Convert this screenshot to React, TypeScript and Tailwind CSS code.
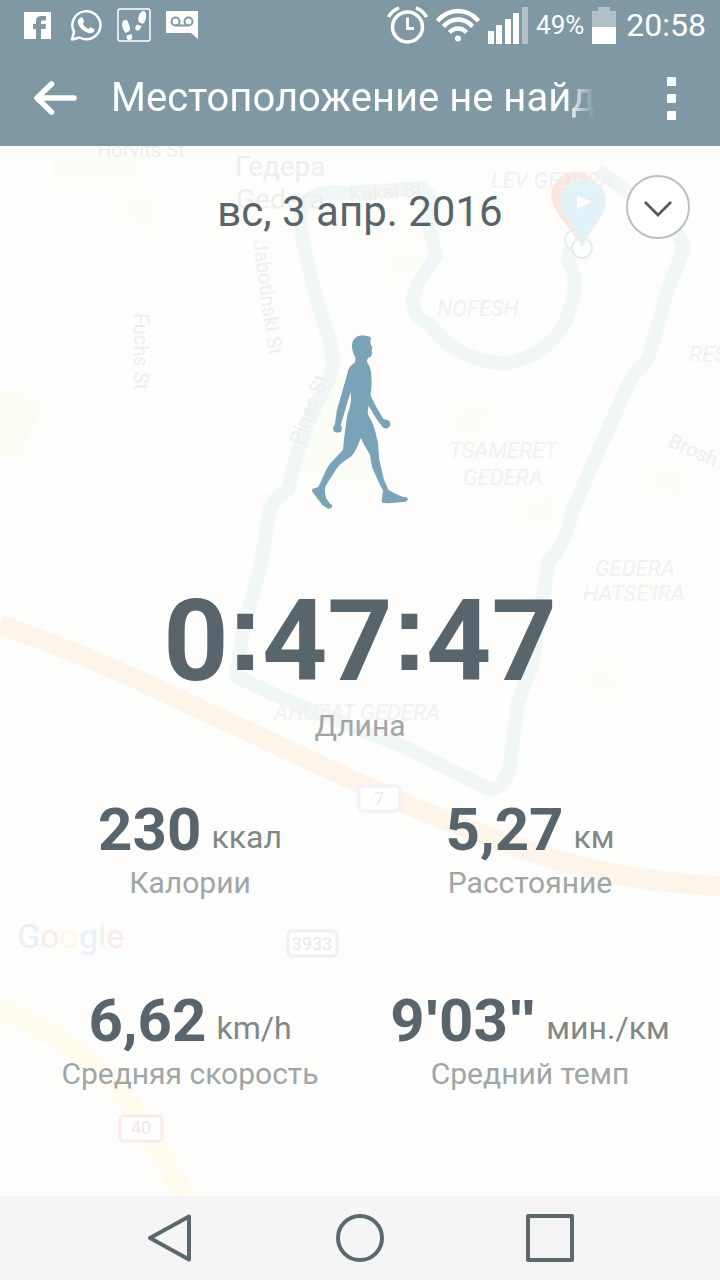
import React from 'react';

function FacebookIcon() {
  return (
    <svg viewBox="0 0 27 27" className="h-[27px] w-[27px]" aria-hidden="true">
      <rect width="27" height="27" fill="#fff" />
      <path d="M12 27V17h-3v-5h3V9.500C12 5.500 14 4 17.500 4H22v4.500h-3c-1.500 0-2 .5-2 2V12h5l-.6 5H17v10z" fill="#7f98a3" />
    </svg>
  );
}

function WhatsAppIcon() {
  return (
    <svg viewBox="0 0 32 33" className="h-[33px] w-8" fill="none" aria-hidden="true">
      <path d="M2 30.500l2-7.800A14 14 0 1 1 9.700 28.500z" stroke="#fff" strokeWidth="2.500" strokeLinejoin="round" />
      <path d="M10.500 8.500c.8-.5 1.800-.4 2.200.4l1.500 3.300c.2.600-.9 1.900-1.400 2.500 1.300 2.500 3.200 4.200 5.800 5.300.7-.8 1.400-2 2-1.800l3.400 1.700c.9.500.3 2.400-.5 3.200-1.600 1.500-4 1.400-6.600.3-4-1.600-7-4.500-8.700-8.200-1.100-2.600-.2-5.400 2.300-6.700z" fill="#fff" />
    </svg>
  );
}

function StepsIcon() {
  return (
    <svg viewBox="0 0 34 34" className="h-[34px] w-[34px]" aria-hidden="true">
      <rect x="1" y="1" width="32" height="32" rx="2" fill="none" stroke="#fff" strokeWidth="1.500" />
      <path d="M21.500 9c1-4 3.500-6.500 5.500-6 3 1 2.500 7 .8 10.500-.7 1.600-1.800 2.500-3.300 2l-2-1c-1.500-1-1.500-3-1-5.500z" fill="#fff" />
      <path d="M20 16.500l4.500 1.500c-.5 2.500-2.500 5-4.700 4.500-2.300-.7-2-3.500.2-6z" fill="#fff" />
      <path d="M5.500 14c1.500-3.500 5-2.500 6 1l1.500 5c.3 1.400-.3 2.800-1 3.300l-3 1.700C7 24 4 17.500 5.500 14z" fill="#fff" />
      <path d="M9.500 27.500l5-1.500c1.500 3 .5 5.700-1.800 6.300-2.500 0-3.200-1.800-3.200-4.800z" fill="#fff" />
    </svg>
  );
}

function VoicemailIcon() {
  return (
    <svg viewBox="0 0 32 28" className="h-7 w-8" aria-hidden="true">
      <path d="M0 0h32v28l-7-6H0z" fill="#fff" />
      <g fill="none" stroke="#7f98a3" strokeWidth="2">
        <circle cx="9.500" cy="10.500" r="4" />
        <circle cx="22.500" cy="10.500" r="4" />
        <path d="M9.500 14.500h13" />
      </g>
    </svg>
  );
}

function AlarmIcon() {
  return (
    <svg viewBox="0 0 41 38" className="h-[38px] w-[41px]" fill="none" stroke="#fff" aria-hidden="true">
      <circle cx="20.500" cy="21" r="15" strokeWidth="3.500" />
      <path d="M20.500 11.500V22.500H27" strokeWidth="2.800" />
      <path d="M1.500 11Q5 4.500 12 1.800M39.500 11Q36 4.500 29 1.800" strokeWidth="3.500" />
    </svg>
  );
}

function WifiIcon() {
  return (
    <svg viewBox="0 0 44 34" className="h-[34px] w-11" fill="none" stroke="#fff" strokeWidth="4.500" aria-hidden="true">
      <path d="M1.500 13Q10 3 22 3t20.500 10" />
      <path d="M7.500 18.500Q13.500 11.500 22 11.500t14.500 7" />
      <path d="M13.500 24.500Q17 20.500 22 20.500t8.500 4" />
      <circle cx="22" cy="30.500" r="3" fill="#fff" stroke="none" />
    </svg>
  );
}

function SignalIcon() {
  return (
    <svg viewBox="0 0 40 37" className="h-[37px] w-10" fill="#fff" aria-hidden="true">
      <rect x="0" y="24" width="6" height="13" />
      <rect x="8" y="18" width="6" height="19" />
      <rect x="17" y="12" width="6" height="25" />
      <rect x="25" y="6" width="6" height="31" />
      <rect x="34" y="0" width="6" height="37" opacity=".4" />
    </svg>
  );
}

function BatteryIcon() {
  return (
    <svg viewBox="0 0 24 37" className="h-[37px] w-6" fill="#fff" aria-hidden="true">
      <path d="M0 20V4h6V0h12v4h6v16z" opacity=".4" />
      <rect y="20" width="24" height="17" />
    </svg>
  );
}

function StatusBar() {
  return (
    <div className="flex h-[50px] items-center justify-between pl-6 pr-3.5 text-white">
      <div className="flex items-center gap-[15px]">
        <span className="pr-1"><FacebookIcon /></span>
        <WhatsAppIcon />
        <StepsIcon />
        <VoicemailIcon />
      </div>
      <div className="flex items-center gap-2">
        <AlarmIcon />
        <WifiIcon />
        <SignalIcon />
        <span className="text-[26px] leading-8">49%</span>
        <BatteryIcon />
        <span className="pl-0.5 text-[32px] leading-8">20:58</span>
      </div>
    </div>
  );
}

function TitleBar() {
  return (
    <div className="flex h-24 items-center text-white">
      <button type="button" aria-label="Назад" className="ml-[34px] shrink-0">
        <svg viewBox="0 0 43 34" className="h-[34px] w-[43px]" fill="none" stroke="#fff" strokeWidth="5.500" strokeLinecap="round" strokeLinejoin="round">
          <path d="M17.500 3L3 17l14.500 14M4 17h36" />
        </svg>
      </button>
      <h1 className="ml-8 overflow-hidden whitespace-nowrap pl-0.5 text-[40px] font-normal leading-[48px] [mask-image:linear-gradient(to_right,#000_94%,transparent)]">
        Местоположение не найд
      </h1>
      <button type="button" aria-label="Меню" className="ml-auto mr-10 flex shrink-0 flex-col gap-2 px-1">
        <span className="h-[9px] w-[9px] rounded-[1px] bg-white" />
        <span className="h-[9px] w-[9px] rounded-[1px] bg-white" />
        <span className="h-[9px] w-[9px] rounded-[1px] bg-white" />
      </button>
    </div>
  );
}

function MapBackdrop() {
  return (
    <svg viewBox="0 146 720 1050" preserveAspectRatio="xMidYMin slice" className="absolute inset-0 h-full w-full" aria-hidden="true">
      <rect y="146" width="720" height="1050" fill="#fdfdfb" />
      <g fill="#fbfdf7">
        <path d="M50 160l90-5-5 28-80-2zM125 200l35-8-10 40-28-15zM388 250l35 5-2 25-33-5zM456 410l34-5-6 30-30-3zM520 505l32-10 6 22-32 8zM650 470l38-4-6 30-32-3zM335 365l-40 110 90 10-20-100zM585 670l40-5-5 25-32 2z" />
        <path d="M0 390l44 14-25 52-19-2z" fill="#f9fdf4" />
      </g>
      <g fill="none" stroke="#fff" opacity=".65">
        <path d="M0 375Q60 388 120 420Q200 465 290 492Q380 515 540 552L720 580" strokeWidth="12" />
        <path d="M0 294H115M145 266H230M10 150V375M48 150V290M108 290V385M145 260V420M215 170V400M170 170L155 240M145 380L280 375M178 470Q175 560 205 580L240 585M220 485L222 575M430 440L470 350M670 250L600 400M610 150L700 240M540 530L720 540M540 665Q640 650 650 730M560 740L670 750M600 760V810M640 760V810M570 690V760" strokeWidth="6" />
        <path d="M0 880Q130 880 230 920L360 955M360 960L650 1050L720 1060M475 880L450 980" strokeWidth="10" />
      </g>
      <path d="M0 625Q80 652 170 695L350 779Q450 826 560 861Q640 883 720 886" fill="none" stroke="#fef5ea" strokeWidth="20" />
      <path d="M0 1009Q60 1032 120 1088Q145 1125 185 1196" fill="none" stroke="#fffced" strokeWidth="21" />
      <g fill="none" stroke="#f1f6f7" strokeWidth="14" strokeLinejoin="round">
        <path d="M428 188L345 193Q298 188 300 225Q310 280 326 330Q340 362 325 387Q300 435 288 490Q270 500 269 515Q262 570 245 620L236 676L290 702L400 745L491 790Q507 785 510 765L518 702L532 665L549 560Q566 545 572 512L590 470L632 376L648 359L668 290L684 248Q676 225 652 210L598 170" />
        <path d="M428 188L430 230L436 256L420 280Q402 312 430 325Q455 360 505 364Q550 355 566 320Q582 280 568 262L572 246" />
      </g>
      <circle cx="575" cy="240" r="10" fill="#fff" stroke="#e9efef" strokeWidth="2" />
      <path d="M551 195a24 24 0 1 1 49 3c-3 19-19 29-22 47-4-18-25-28-27-50z" fill="#fde5de" />
      <circle cx="582" cy="248" r="10" fill="#fff" stroke="#e2eded" strokeWidth="2" />
      <path d="M560 201a23 23 0 1 1 46 0c0 16-16 26-22 45h-3c-5-19-21-30-21-45z" fill="#e1f1f7" />
      <path d="M577 195v14l14-7z" fill="#fff" />
      <g fill="#eeefed" fontFamily="Roboto, sans-serif" fontSize="20">
        <text x="97" y="157">Horvits St</text>
        <text x="235" y="176" fontSize="28">Гедера</text>
        <text x="236" y="209" fontSize="28">Gedera</text>
        <text x="350" y="202" transform="rotate(-5 350 202)">Kakal St</text>
        <text x="253" y="241" transform="rotate(82 253 241)">Jabotinski St</text>
        <text x="134" y="313" transform="rotate(90 134 313)">Fuchs St</text>
        <text x="302" y="446" transform="rotate(-69 302 446)">Pines St</text>
        <text x="667" y="446" transform="rotate(24 667 446)">Brosh</text>
      </g>
      <g fill="#f1f2ef" fontFamily="Roboto, sans-serif" fontSize="22" fontStyle="italic">
        <text x="491" y="188">LEV GEDERA</text>
        <text x="437" y="316">NOFESH</text>
        <text x="689" y="362">RES</text>
        <text x="449" y="458">TSAMERET</text>
        <text x="463" y="485">GEDERA</text>
        <text x="595" y="576">GEDERA</text>
        <text x="583" y="601">HATSE&apos;IRA</text>
        <text x="274" y="720">AHUZAT GEDERA</text>
      </g>
      <g fontFamily="Roboto, sans-serif" fontSize="18" textAnchor="middle" strokeWidth="3">
        <rect x="359" y="786" width="41" height="25" rx="4" fill="#fefefd" stroke="#f2f2f8" />
        <text x="379" y="805" fill="#ebebeb">7</text>
        <rect x="288" y="931" width="49" height="25" rx="4" fill="#fefefd" stroke="#f0f0ef" />
        <text x="312" y="950" fill="#e9e9e8">3933</text>
        <rect x="120" y="1116" width="42" height="25" rx="4" fill="#fefefd" stroke="#faeceb" />
        <text x="141" y="1134" fill="#f1e7e6">40</text>
      </g>
      <text x="17" y="948" fontFamily="Roboto, sans-serif" fontSize="34">
        <tspan fill="#e9f0fb">G</tspan>
        <tspan fill="#fbeceb">o</tspan>
        <tspan fill="#fdf8e6">o</tspan>
        <tspan fill="#e9f0fb">g</tspan>
        <tspan fill="#ebf6ed">l</tspan>
        <tspan fill="#fbeceb">e</tspan>
      </text>
    </svg>
  );
}

function Walker() {
  return (
    <svg viewBox="69 46 288 522" className="mt-[99px] h-[174px] w-24" fill="#7ba3b7" aria-hidden="true">
      <path d="M189 75Q190 60 205 50L222 47L243 51L246 58L244 66L246 75L250 85L248 92L250 98L246 111L237 115L234 122Q233 130 241 138L246 155L248 190L246 215L245 228L262 262L283 298L298 302L304 310L303 320L292 327L281 323L262 297L243 265L238 258L236 283Q250 305 258 332L267 370L271 420Q280 460 285 480L298 510L315 520L340 531L354 533L357 540L350 546L300 551L281 550L278 545L282 512L275 500L250 445Q245 425 243 405L225 375L216 355L205 380Q195 405 183 413L165 425Q145 440 138 455L115 490Q106 505 108 518L111 535L121 550L130 557L127 566L117 567L100 556L80 530L69 515L70 508L88 502L105 465Q115 440 130 425L162 390L165 360L170 320L175 285L182 265L186 240L185 216L178 240L163 290L155 315L159 325L156 336L146 339L135 336L132 325L138 312L143 275L157 225L170 180L178 150Q183 138 198 128L200 115Q188 95 189 75Z" />
    </svg>
  );
}

function Colon() {
  return <span className="-mx-0.5 font-['Liberation_Sans',sans-serif] text-[112px] leading-[98px]">:</span>;
}

type StatProps = { value: React.ReactNode; unit: string; label: string };

function Stat({ value, unit, label }: StatProps) {
  return (
    <div className="flex flex-col items-center whitespace-nowrap">
      <dd className="flex items-end gap-2.5">
        <span className="text-[60px] font-bold leading-[60px] text-[#58656d]">{value}</span>
        <span className="text-[32px] leading-[46px] text-[#808889]">{unit}</span>
      </dd>
      <dt className="order-last mt-[5px] text-[30px] leading-9 text-[#9fa6a7]">{label}</dt>
    </div>
  );
}

const pace = (
  <>
    9<span className="font-['Liberation_Sans',sans-serif]">&apos;</span>
    03<span className="font-['Liberation_Sans',sans-serif]">&quot;</span>
  </>
);

const stats: StatProps[] = [
  { value: '230', unit: 'ккал', label: 'Калории' },
  { value: '5,27', unit: 'км', label: 'Расстояние' },
  { value: '6,62', unit: 'km/h', label: 'Средняя скорость' },
  { value: pace, unit: 'мин./км', label: 'Средний темп' },
];

function NavigationBar() {
  return (
    <nav className="flex h-[84px] items-center justify-center gap-[142px] bg-[#f5f5f5]">
      <button type="button" aria-label="Назад">
        <svg viewBox="0 0 48 48" className="h-12 w-12" fill="none" stroke="#5b686e" strokeWidth="4" strokeLinejoin="round">
          <path d="M43 2.500v43L4 24z" />
        </svg>
      </button>
      <button type="button" aria-label="Домой">
        <svg viewBox="0 0 48 48" className="h-12 w-12" fill="none" stroke="#5b686e" strokeWidth="4">
          <circle cx="24" cy="24" r="22" />
        </svg>
      </button>
      <button type="button" aria-label="Недавние">
        <svg viewBox="0 0 48 48" className="h-12 w-12" fill="none" stroke="#5b686e" strokeWidth="4" strokeLinejoin="round">
          <rect x="2" y="2" width="44" height="44" />
        </svg>
      </button>
    </nav>
  );
}

export default function App() {
  return (
    <div className="flex min-h-screen flex-col font-['Roboto',sans-serif]">
      <header className="bg-[#7f98a3]">
        <StatusBar />
        <TitleBar />
      </header>
      <main className="relative flex-1 overflow-hidden">
        <MapBackdrop />
        <button
          type="button"
          aria-label="Свернуть"
          className="absolute right-[30px] top-[29px] flex h-16 w-16 items-center justify-center rounded-full border-2 border-[#bcbfc0] bg-white"
        >
          <svg viewBox="0 0 28 16" className="mt-1 h-4 w-7" fill="none" stroke="#555b5f" strokeWidth="2.800">
            <path d="M1 1l13 13L27 1" />
          </svg>
        </button>
        <div className="pointer-events-none relative flex flex-col items-center pt-[42px]">
          <p className="text-[42px] leading-[48px] text-[#58646c]">вс, 3 апр. 2016</p>
          <Walker />
          <p className="mt-[74px] flex items-start text-[114px] font-bold leading-[116px] text-[#58656d]">
            <span>0</span>
            <Colon />
            <span>47</span>
            <Colon />
            <span>47</span>
          </p>
          <p className="mt-[9px] text-[30px] leading-9 text-[#9fa6a7]">Длина</p>
          <dl className="mt-14 grid w-full grid-cols-2 gap-y-[90px] px-5 pb-[104px]">
            {stats.map((stat) => (
              <Stat key={stat.label} {...stat} />
            ))}
          </dl>
        </div>
      </main>
      <NavigationBar />
    </div>
  );
}
